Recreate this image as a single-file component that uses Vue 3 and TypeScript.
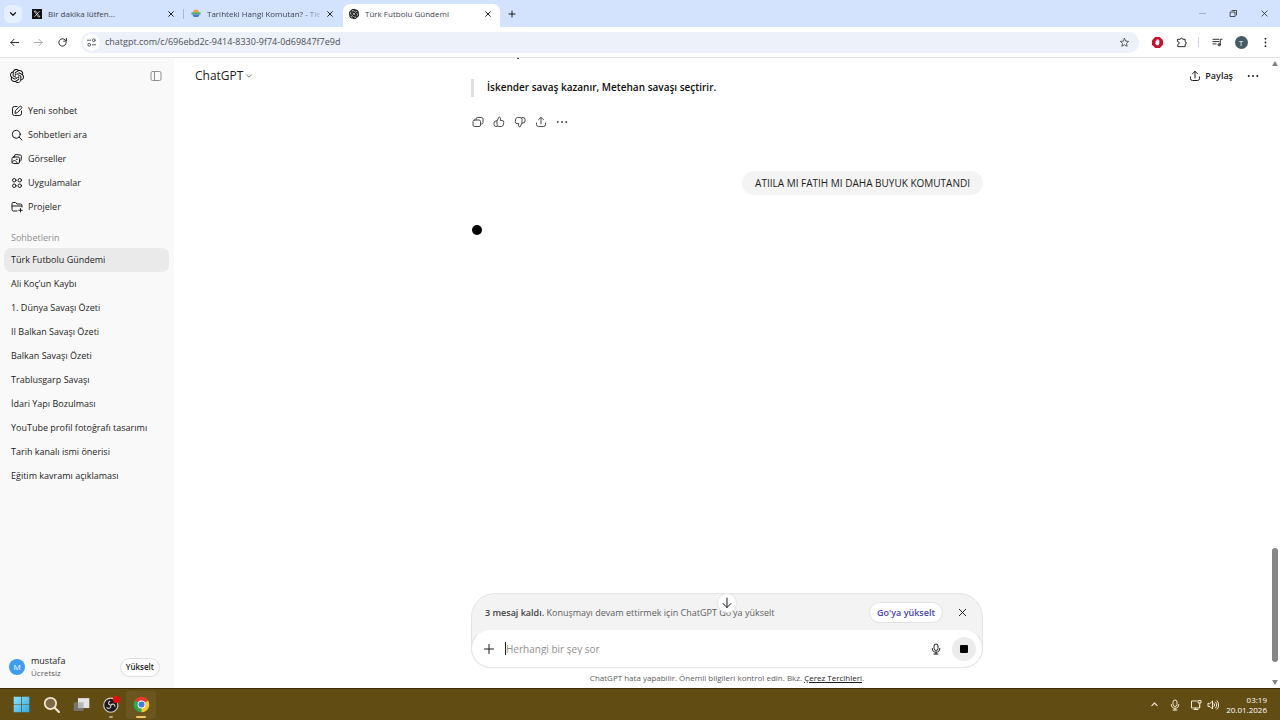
<script setup lang="ts">
import { h, ref } from 'vue'

const glyphs: Record<string, string[]> = {
  down: ['M6 9l6 6 6-6'],
  up: ['M5 15l7-7 7 7'],
  close: ['M5 5l14 14M19 5L5 19'],
  plus: ['M12 3v18M3 12h18'],
  back: ['M21 12H4M11 5l-7 7 7 7'],
  forward: ['M3 12h17M13 5l7 7-7 7'],
  reload: ['M20 12a8 8 0 1 1-2.3-5.7L20 8.500', 'M20.500 3v6h-6'],
  tune: ['M3 7h7M14 17h7', 'M20 7a3 3 0 1 1-6 0 3 3 0 0 1 6 0z', 'M10 17a3 3 0 1 1-6 0 3 3 0 0 1 6 0z'],
  star: ['M12 3l2.700 6 6.500.6-4.900 4.300 1.500 6.400L12 17l-5.800 3.300 1.500-6.400L2.800 9.600 9.300 9z'],
  puzzle: ['M4 5h5.500a2.500 2.500 0 0 1 5 0H20v5.500a2.500 2.500 0 0 1 0 5V21H4v-5a3 3 0 0 0 0-6z'],
  playlist: ['M2 5h13M2 10h13M2 15h7', 'M18 17V5h4', 'M18 17a2.500 2.500 0 1 1-5 0 2.500 2.500 0 0 1 5 0z'],
  minimize: ['M4 12h16'],
  restore: ['M4 8h12v12H4z', 'M8 4h12v12'],
  panel: ['M5 3h14a3 3 0 0 1 3 3v12a3 3 0 0 1-3 3H5a3 3 0 0 1-3-3V6a3 3 0 0 1 3-3z', 'M9 3v18'],
  compose: ['M12 3H7a4 4 0 0 0-4 4v10a4 4 0 0 0 4 4h10a4 4 0 0 0 4-4v-5', 'M8 16l1-5 8.500-8a2.500 2.500 0 0 1 3.500 3.500L13 15z'],
  search: ['M18.500 10.500a8 8 0 1 1-16 0 8 8 0 0 1 16 0z', 'M16.300 16.300L22 22'],
  images: ['M7 8V6a3 3 0 0 1 3.500-3l8 1A3 3 0 0 1 21 7.500l-1 7a3 3 0 0 1-3 2.500', 'M5 8h9a3 3 0 0 1 3 3v7a3 3 0 0 1-3 3H5a3 3 0 0 1-3-3v-7a3 3 0 0 1 3-3z', 'M2.500 18c4-5 7-4 10 2.500M10.500 12.500h2'],
  apps: ['M10 6.500a3.500 3.500 0 1 1-7 0 3.500 3.500 0 0 1 7 0z', 'M21 6.500a3.500 3.500 0 1 1-7 0 3.500 3.500 0 0 1 7 0z', 'M10 17.500a3.500 3.500 0 1 1-7 0 3.500 3.500 0 0 1 7 0z', 'M21 17.500a3.500 3.500 0 1 1-7 0 3.500 3.500 0 0 1 7 0z'],
  folder: ['M12 20H5a3 3 0 0 1-3-3V5a2 2 0 0 1 2-2h5l3 3h7a3 3 0 0 1 3 3v3M2 10h19', 'M19 15v7M15.500 18.500h7'],
  copy: ['M8 8V6a3 3 0 0 1 3-3h8a3 3 0 0 1 3 3v7a3 3 0 0 1-3 3h-2', 'M5 8h9a3 3 0 0 1 3 3v7a3 3 0 0 1-3 3H5a3 3 0 0 1-3-3v-7a3 3 0 0 1 3-3z'],
  like: ['M8 21H6a4 4 0 0 1-4-4v-3a4 4 0 0 1 4-4h2l4-8c2 0 3.500 1.500 3 4l-.6 3H18a3.500 3.500 0 0 1 3.500 4l-1 5a4 4 0 0 1-4 3H12a4 4 0 0 1-4-4v-7'],
  dislike: ['M16 3h2a4 4 0 0 1 4 4v3a4 4 0 0 1-4 4h-2l-4 8c-2 0-3.500-1.500-3-4l.6-3H6a3.500 3.500 0 0 1-3.500-4l1-5a4 4 0 0 1 4-3H12a4 4 0 0 1 4 4v7'],
  share: ['M12 16V3M7 7.500L12 2.500l5 5', 'M3 14v3a4 4 0 0 0 4 4h10a4 4 0 0 0 4-4v-3'],
  more: ['M3.500 12h.01M12 12h.01M20.500 12h.01'],
  kebab: ['M12 4v.01M12 12v.01M12 20v.01'],
  arrow: ['M12 2v19M4 13l8 8 8-8'],
  mic: ['M8 6a4 4 0 0 1 8 0v5a4 4 0 0 1-8 0z', 'M4.500 11a7.500 7.500 0 0 0 15 0M12 18.500V22M8 22h8'],
  network: ['M14 4H3v14h16v-6M8 21h8M11 18v3', 'M17 3h5v5h-5zM19.500 8v9'],
  volume: ['M2 9v6h4l5 5V4L6 9zM14 9a4 4 0 0 1 0 6M17 6a8 8 0 0 1 0 12M20 3.500a12 12 0 0 1 0 17'],
}

const Icon = (props: { name: string }) =>
  h(
    'svg',
    { class: 'icon', viewBox: '0 0 24 24', 'aria-hidden': 'true' },
    glyphs[props.name].map((d) => h('path', { d })),
  )
Icon.props = ['name']

const knot =
  'M22.2819 9.8211a5.9847 5.9847 0 0 0-.5157-4.9108 6.0462 6.0462 0 0 0-6.5098-2.9A6.0651 6.0651 0 0 0 4.9807 4.1818a5.9847 5.9847 0 0 0-3.9977 2.9 6.0462 6.0462 0 0 0 .7427 7.0966 5.98 5.98 0 0 0 .511 4.9107 6.051 6.051 0 0 0 6.5146 2.9001A5.9847 5.9847 0 0 0 13.2599 24a6.0557 6.0557 0 0 0 5.7718-4.2058 5.9894 5.9894 0 0 0 3.9977-2.9001 6.0557 6.0557 0 0 0-.7475-7.0729zm-9.022 12.6081a4.4755 4.4755 0 0 1-2.8764-1.0408l.1419-.0804 4.7783-2.7582a.7948.7948 0 0 0 .3927-.6813v-6.7369l2.02 1.1686a.071.071 0 0 1 .038.052v5.5826a4.504 4.504 0 0 1-4.4945 4.4944zm-9.6607-4.1254a4.4708 4.4708 0 0 1-.5346-3.0137l.142.0852 4.783 2.7582a.7712.7712 0 0 0 .7806 0l5.8428-3.3685v2.3324a.0804.0804 0 0 1-.0332.0615L9.74 19.9502a4.4992 4.4992 0 0 1-6.1408-1.6464zM2.3408 7.8956a4.485 4.485 0 0 1 2.3655-1.9728V11.6a.7664.7664 0 0 0 .3879.6765l5.8144 3.3543-2.0201 1.1685a.0757.0757 0 0 1-.071 0l-4.8303-2.7865A4.504 4.504 0 0 1 2.3408 7.872zm16.5963 3.8558L13.1038 8.364 15.1192 7.2a.0757.0757 0 0 1 .071 0l4.8303 2.7913a4.4944 4.4944 0 0 1-.6765 8.1042v-5.6772a.79.79 0 0 0-.407-.667zm2.0107-3.0231l-.142-.0852-4.7735-2.7818a.7759.7759 0 0 0-.7854 0L9.409 9.2297V6.8974a.0662.0662 0 0 1 .0284-.0615l4.8303-2.7866a4.4992 4.4992 0 0 1 6.6802 4.66zM8.3065 12.863l-2.02-1.1638a.0804.0804 0 0 1-.038-.0567V6.0742a4.4992 4.4992 0 0 1 7.3757-3.4537l-.142.0805L8.704 5.459a.7948.7948 0 0 0-.3927.6813zm1.0976-2.3654l2.602-1.4998 2.6069 1.4998v2.9994l-2.5974 1.4997-2.6067-1.4997Z'

const menu = [
  { icon: 'compose', label: 'Yeni sohbet' },
  { icon: 'search', label: 'Sohbetleri ara' },
  { icon: 'images', label: 'Görseller' },
  { icon: 'apps', label: 'Uygulamalar' },
  { icon: 'folder', label: 'Projeler' },
]

const chats = [
  'Türk Futbolu Gündemi',
  'Ali Koç’un Kaybı',
  '1. Dünya Savaşı Özeti',
  'II Balkan Savaşı Özeti',
  'Balkan Savaşı Özeti',
  'Trablusgarp Savaşı',
  'İdari Yapı Bozulması',
  'YouTube profil fotoğrafı tasarımı',
  'Tarih kanalı ismi önerisi',
  'Eğitim kavramı açıklaması',
]

const actions = [
  { icon: 'copy', label: 'Kopyala' },
  { icon: 'like', label: 'İyi yanıt' },
  { icon: 'dislike', label: 'Kötü yanıt' },
  { icon: 'share', label: 'Paylaş' },
  { icon: 'more', label: 'Diğer' },
]

const active = ref(0)
const url = ref('chatgpt.com/c/696ebd2c-9414-8330-9f74-0d69847f7e9d')
const draft = ref('')
</script>

<template>
  <div class="desktop">
    <header class="tabs">
      <button class="tab-search" aria-label="Sekmelerde ara"><Icon name="down" /></button>
      <div class="tab">
        <svg class="favicon" viewBox="0 0 24 24" aria-hidden="true">
          <path d="M0 0h24v24H0z" fill="#111" />
          <path d="M5 5h4l10 14h-4zM18.500 5L5.500 19" fill="none" stroke="#fff" stroke-width="1.600" />
        </svg>
        <span class="tab-title">Bir dakika lütfen...</span>
        <button class="tab-close" aria-label="Sekmeyi kapat"><Icon name="close" /></button>
      </div>
      <i class="tab-line"></i>
      <div class="tab">
        <svg class="favicon" viewBox="0 0 24 24" aria-hidden="true">
          <path d="M5 8a7 7 0 0 1 14 0z" fill="#e9a23b" />
          <path d="M1 8h22v5H1z" fill="#55a868" />
          <path d="M3 13h18l-4 6H7z" fill="#3b7cc4" />
        </svg>
        <span class="tab-title faded">Tarihteki Hangi Komutan? - Tie</span>
        <button class="tab-close" aria-label="Sekmeyi kapat"><Icon name="close" /></button>
      </div>
      <div class="tab current">
        <svg class="favicon" viewBox="0 0 24 24" aria-hidden="true"><path :d="knot" stroke="#000" /></svg>
        <span class="tab-title">Türk Futbolu Gündemi</span>
        <button class="tab-close" aria-label="Sekmeyi kapat"><Icon name="close" /></button>
      </div>
      <button class="tab-new" aria-label="Yeni sekme"><Icon name="plus" /></button>
      <div class="window-buttons">
        <button aria-label="Simge durumuna küçült"><Icon name="minimize" /></button>
        <button aria-label="Geri yükle"><Icon name="restore" /></button>
        <button aria-label="Kapat"><Icon name="close" /></button>
      </div>
    </header>

    <div class="toolbar">
      <button aria-label="Geri"><Icon name="back" /></button>
      <button class="dim" aria-label="İleri"><Icon name="forward" /></button>
      <button aria-label="Yenile"><Icon name="reload" /></button>
      <div class="address">
        <button class="site-info" aria-label="Site bilgileri"><Icon name="tune" /></button>
        <input v-model="url" aria-label="Adres çubuğu" spellcheck="false" />
        <button aria-label="Yer işareti ekle"><Icon name="star" /></button>
      </div>
      <div class="extensions">
        <button aria-label="Reklam engelleyici">
          <svg class="blocker" viewBox="0 0 24 24" aria-hidden="true">
            <path d="M7 0h10l7 7v10l-7 7H7l-7-7V7z" fill="#c4122f" />
            <path d="M8 12V8h2V6h2V5h2v2h2v7l-2 4h-4l-3-4z" fill="#fff" />
          </svg>
        </button>
        <button aria-label="Uzantılar"><Icon name="puzzle" /></button>
        <i class="divider"></i>
        <button aria-label="Medya"><Icon name="playlist" /></button>
        <button class="profile" aria-label="Profil"><span>T</span></button>
        <button class="kebab" aria-label="Menü"><Icon name="kebab" /></button>
      </div>
    </div>

    <div class="page">
      <aside class="sidebar">
        <div class="brand">
          <svg class="logo" viewBox="0 0 24 24" aria-hidden="true"><path :d="knot" /></svg>
          <button class="collapse" aria-label="Kenar çubuğunu kapat"><Icon name="panel" /></button>
        </div>
        <nav class="menu">
          <a v-for="item in menu" :key="item.label" href="#"><Icon :name="item.icon" />{{ item.label }}</a>
        </nav>
        <h2>Sohbetlerin</h2>
        <nav class="history">
          <a
            v-for="(chat, i) in chats"
            :key="chat"
            href="#"
            :class="{ active: i === active }"
            @click.prevent="active = i"
            >{{ chat }}</a
          >
        </nav>
        <div class="account">
          <span class="avatar">M</span>
          <div class="who">
            <span>mustafa</span>
            <small>Ücretsiz</small>
          </div>
          <button class="upgrade">Yükselt</button>
        </div>
      </aside>

      <main class="main">
        <div class="topbar">
          <button class="model">ChatGPT <Icon name="down" /></button>
          <button class="share"><Icon name="share" />Paylaş</button>
          <button class="more" aria-label="Diğer"><Icon name="more" /></button>
        </div>

        <section class="thread">
          <div class="cut-line"><i></i></div>
          <blockquote>İskender savaş kazanır, Metehan savaşı seçtirir.</blockquote>
          <div class="actions">
            <button v-for="a in actions" :key="a.icon" :class="a.icon" :aria-label="a.label">
              <Icon :name="a.icon" />
            </button>
          </div>
          <p class="bubble">ATIILA MI FATIH MI DAHA BUYUK KOMUTANDI</p>
          <span class="pending"></span>
        </section>

        <footer class="dock">
          <div class="composer">
            <div class="notice">
              <p><b>3 mesaj kaldı.</b> Konuşmayı devam ettirmek için ChatGPT Go'ya yükselt</p>
              <button class="go">Go'ya yükselt</button>
              <button class="dismiss" aria-label="Kapat"><Icon name="close" /></button>
            </div>
            <form class="prompt" @submit.prevent>
              <button type="button" class="add" aria-label="Ekle"><Icon name="plus" /></button>
              <i class="caret"></i>
              <input v-model="draft" placeholder="Herhangi bir şey sor" aria-label="Mesaj" />
              <button type="button" class="dictate" aria-label="Dikte et"><Icon name="mic" /></button>
              <button type="button" class="stop" aria-label="Durdur"><i></i></button>
            </form>
            <button class="jump" aria-label="En alta git"><Icon name="arrow" /></button>
          </div>
          <p class="legal">ChatGPT hata yapabilir. Önemli bilgileri kontrol edin. Bkz. <a href="#">Çerez Tercihleri</a>.</p>
        </footer>

        <div class="scrollbar" aria-hidden="true">
          <i class="tri-up"></i>
          <i class="thumb"></i>
          <i class="tri-down"></i>
        </div>
      </main>
    </div>

    <footer class="taskbar">
      <button aria-label="Başlat">
        <svg viewBox="0 0 24 24" aria-hidden="true">
          <defs>
            <linearGradient id="pane" x1="0" y1="0" x2="1" y2="1">
              <stop offset="0" stop-color="#8fe3fb" />
              <stop offset="1" stop-color="#2ea9e6" />
            </linearGradient>
          </defs>
          <path d="M1 1h10.500v10.500H1zM12.500 1H23v10.500H12.500zM1 12.500h10.500V23H1zM12.500 12.500H23V23H12.500z" fill="url(#pane)" />
        </svg>
      </button>
      <button aria-label="Ara">
        <svg viewBox="0 0 24 24" aria-hidden="true">
          <circle cx="10.500" cy="10.500" r="8" fill="#7c6a44" stroke="#f3e6cf" stroke-width="2.500" />
          <path d="M16.500 16.500L22.500 22.500" stroke="#f3e6cf" stroke-width="3" stroke-linecap="round" />
        </svg>
      </button>
      <button aria-label="Görev görünümü">
        <svg viewBox="0 0 24 24" aria-hidden="true">
          <path d="M1 9h14v12H1z" fill="#77746f" />
          <path d="M7 3h16v14H7z" fill="#e4e5e8" />
          <path d="M7 9h8v8H7z" fill="#b5b6ba" />
        </svg>
      </button>
      <button aria-label="OBS" class="running">
        <svg viewBox="0 0 24 24" aria-hidden="true">
          <circle cx="11" cy="13" r="10" fill="#1d1b22" stroke="#d8d0c4" stroke-width="1.600" />
          <path d="M11 13c-4-1-4-4-1-6M11 13c3-3 6-1 6 2M11 13c1 4-3 6-6 3" fill="none" stroke="#d8d0c4" stroke-width="1.500" />
          <circle cx="19" cy="5" r="5" fill="#ee0909" />
        </svg>
      </button>
      <button aria-label="Chrome" class="running focused">
        <svg viewBox="0 0 24 24" aria-hidden="true">
          <path d="M12 12L2.500 6.500A11 11 0 0 1 21.500 6.500z" fill="#e33b2e" />
          <path d="M12 12L2.500 6.500A11 11 0 0 0 12 23z" fill="#2da94f" />
          <path d="M12 12L12 23A11 11 0 0 0 21.500 6.500z" fill="#fcc934" />
          <circle cx="12" cy="12" r="5.500" fill="#fff" />
          <circle cx="12" cy="12" r="4.300" fill="#3f7ee8" />
        </svg>
      </button>
      <div class="tray">
        <Icon name="up" class="tray-up" />
        <Icon name="mic" class="tray-mic" />
        <Icon name="network" />
        <Icon name="volume" />
        <div class="clock"><span>03:19</span><span>20.01.2026</span></div>
      </div>
    </footer>
  </div>
</template>

<style>
html,
body {
  margin: 0;
  height: 100%;
}
</style>

<style scoped>
.desktop {
  display: flex;
  flex-direction: column;
  height: 100vh;
  overflow: hidden;
  background: #fff;
  color: #1c1c1c;
  font: 9px/12px 'Open Sans', 'Noto Sans', sans-serif;
}
.desktop * {
  box-sizing: border-box;
}
button {
  display: flex;
  align-items: center;
  justify-content: center;
  flex: none;
  padding: 0;
  border: 0;
  background: none;
  color: inherit;
  font: inherit;
}
input {
  min-width: 0;
  flex: 1;
  padding: 0;
  border: 0;
  outline: 0;
  background: none;
  color: inherit;
  font: inherit;
}
a {
  color: inherit;
  text-decoration: none;
}
p {
  margin: 0;
}
.icon {
  width: 12px;
  height: 12px;
  flex: none;
  fill: none;
  stroke: currentColor;
  stroke-width: 2;
  stroke-linecap: round;
  stroke-linejoin: round;
}

/* Tab strip */
.tabs {
  display: flex;
  align-items: center;
  flex: none;
  height: 27px;
  padding-left: 4px;
  background: #d3e2fd;
}
.tab-search {
  width: 18px;
  height: 18px;
  margin-right: 4px;
  border-radius: 6px;
  background: #e6effd;
}
.tab-search .icon {
  width: 10px;
  height: 10px;
  stroke-width: 3;
}
.tab {
  display: flex;
  align-items: center;
  align-self: flex-end;
  width: 157px;
  height: 23px;
  padding: 0 8px 4px 6px;
  gap: 6px;
  color: #3d4350;
  font-size: 8px;
}
.tab + .tab {
  margin-left: 1px;
}
.tab-line {
  width: 1px;
  height: 10px;
  margin-right: 1px;
  background: #a9bad8;
}
.favicon {
  width: 10px;
  height: 10px;
  flex: none;
}
.tab-title {
  flex: 1;
  overflow: hidden;
  white-space: nowrap;
}
.faded {
  mask-image: linear-gradient(90deg, #000 85%, #0003);
}
.tab-close .icon {
  width: 8px;
  height: 8px;
  stroke: #222;
  stroke-width: 3;
}
.current {
  border-radius: 7px 7px 0 0;
  background: #fff;
}
.tab-new {
  width: 24px;
}
.tab-new .icon {
  width: 8px;
  height: 8px;
  stroke-width: 3;
}
.window-buttons {
  display: flex;
  margin-left: auto;
}
.window-buttons button {
  width: 31px;
  height: 27px;
}
.window-buttons .icon {
  width: 9px;
  height: 9px;
}
.window-buttons button:first-child {
  color: #8d98ab;
}

/* Toolbar */
.toolbar {
  display: flex;
  align-items: center;
  flex: none;
  height: 31px;
  padding: 0 6px 0 2px;
  border-bottom: 1px solid #dfe1e2;
}
.toolbar > button {
  width: 24px;
}
.toolbar .icon {
  width: 11px;
  height: 11px;
}
.toolbar .dim {
  color: #a3a5a9;
}
.address {
  display: flex;
  align-items: center;
  flex: 1;
  height: 21px;
  margin-left: 7px;
  padding: 0 9px 0 2px;
  gap: 5px;
  border-radius: 11px;
  background: #edf1fa;
  color: #4c5058;
}
.site-info {
  width: 17px;
  height: 17px;
  border-radius: 50%;
  background: #fff;
}
.extensions {
  display: flex;
  align-items: center;
  padding-left: 6px;
}
.extensions button {
  width: 24px;
}
.extensions .kebab {
  width: 18px;
  margin-left: 3px;
}
.kebab .icon {
  stroke-width: 4;
}
.blocker {
  width: 11px;
  height: 11px;
}
.divider {
  width: 1px;
  height: 10px;
  margin: 0 6px 0 5px;
  background: #ccd5e6;
}
.profile span {
  width: 13px;
  height: 13px;
  border-radius: 50%;
  background: #455a64;
  color: #fff;
  font-size: 8px;
  line-height: 13px;
}

/* Sidebar */
.page {
  display: flex;
  flex: 1;
  min-height: 0;
}
.sidebar {
  display: flex;
  flex-direction: column;
  flex: none;
  width: 174px;
  background: #f9f9f9;
}
.brand {
  display: flex;
  align-items: center;
  justify-content: space-between;
  height: 35px;
  padding: 0 12px 0 10px;
}
.logo {
  width: 14px;
  height: 14px;
}
.collapse {
  color: #8f8f8f;
}
.menu {
  padding-top: 6px;
}
.menu a {
  display: flex;
  align-items: center;
  height: 24px;
  padding-left: 11px;
  gap: 5px;
}
h2 {
  margin: 13px 0 4px 11px;
  color: #8f8f8f;
  font: inherit;
}
.history a {
  display: flex;
  align-items: center;
  height: 24px;
  margin: 0 5px 0 4px;
  padding-left: 7px;
  border-radius: 7px;
  white-space: nowrap;
}
.history .active {
  background: #eaeaea;
}
.account {
  display: flex;
  align-items: center;
  height: 42px;
  margin-top: auto;
  padding: 0 14px 0 9px;
  gap: 6px;
}
.avatar {
  width: 16px;
  border-radius: 50%;
  background: #3f9cf0;
  color: #fff;
  font-size: 8px;
  line-height: 16px;
  text-align: center;
}
.who {
  display: flex;
  flex-direction: column;
  flex: 1;
}
.who small {
  color: #5d5d5d;
  font-size: 8px;
}
.upgrade {
  height: 19px;
  padding: 0 5px;
  border: 1px solid #dedede;
  border-radius: 10px;
  background: #fff;
  font-size: 8px;
  font-weight: 600;
}

/* Conversation */
.main {
  position: relative;
  display: flex;
  flex-direction: column;
  flex: 1;
  min-width: 0;
}
.topbar {
  position: absolute;
  inset: 0 0 auto;
  display: flex;
  align-items: center;
  height: 35px;
  padding: 0 21px;
}
.model {
  margin-right: auto;
  gap: 1px;
  font-size: 12px;
}
.model .icon {
  width: 10px;
  height: 10px;
  color: #6a6a6a;
}
.topbar .share {
  gap: 4px;
  font-weight: 600;
}
.topbar .more {
  margin-left: 14px;
}
.more .icon {
  stroke-width: 4;
}
.thread {
  display: flex;
  flex-direction: column;
  flex: 1;
  width: 100%;
  max-width: 512px;
  margin: 0 auto;
}
.cut-line {
  height: 2px;
  padding-left: 46px;
}
.cut-line i {
  display: block;
  width: 2px;
  height: 1px;
  background: #444;
}
blockquote {
  margin: 19px 0 0;
  padding: 1px 0 2px 13px;
  border-left: 3px solid #e0e0e0;
  color: #0d0d0d;
  font-size: 10px;
  font-weight: 600;
  line-height: 15px;
}
.actions {
  display: flex;
  height: 50px;
  margin-left: -4px;
  color: #4d4d4d;
}
.actions button {
  width: 21px;
}
.bubble {
  align-self: flex-end;
  margin-top: 24px;
  padding: 4px 13px;
  border-radius: 12px;
  background: #f4f4f4;
  font-size: 10px;
  line-height: 16px;
}
.pending {
  width: 10px;
  height: 10px;
  margin: 30px 0 0 1px;
  border-radius: 50%;
  background: #000;
}

/* Composer */
.dock {
  width: 100%;
  max-width: 512px;
  margin: 0 auto;
}
.composer {
  position: relative;
  border: 1px solid #e4e4e4;
  border-radius: 24px 24px 20px 20px;
  background: #f3f3f3;
}
.notice {
  display: flex;
  align-items: center;
  height: 35px;
  padding: 2px 14px 0 13px;
  color: #5d5d5d;
}
.notice p {
  flex: 1;
}
.notice b {
  font-weight: 600;
  color: #444;
}
.go {
  height: 21px;
  padding: 0 7px;
  border: 1px solid #e2e2e2;
  border-radius: 11px;
  background: #fff;
  color: #4a3fb5;
  font-weight: 600;
}
.dismiss {
  margin-left: 14px;
  color: #111;
}
.dismiss .icon {
  width: 11px;
  height: 11px;
}
.prompt {
  display: flex;
  align-items: center;
  height: 39px;
  margin: 0 -1px -1px;
  padding: 0 6px 0 11px;
  border: 1px solid #e4e4e4;
  border-top-color: #f3f3f3;
  border-radius: 20px;
  background: #fff;
  font-size: 10px;
}
.caret {
  width: 1px;
  height: 13px;
  margin-left: 10px;
  background: #222;
}
.prompt input::placeholder {
  color: #8f8f8f;
  opacity: 1;
}
.stop {
  width: 24px;
  height: 24px;
  margin-left: 10px;
  border-radius: 50%;
  background: #ececec;
}
.stop i {
  width: 8px;
  height: 8px;
  border-radius: 1px;
  background: #000;
}
.jump {
  position: absolute;
  top: -1px;
  left: 50%;
  width: 20px;
  height: 20px;
  margin-left: -10px;
  border: 1px solid #e6e6e6;
  border-radius: 50%;
  background: #fff;
}
.legal {
  height: 20px;
  padding-top: 4px;
  color: #5d5d5d;
  font-size: 8px;
  text-align: center;
}
.legal a {
  color: #1c1c1c;
  text-decoration: underline;
}
.scrollbar {
  position: absolute;
  inset: 0 0 0 auto;
  display: flex;
  flex-direction: column;
  align-items: center;
  width: 10px;
  padding: 3px 0;
}
.tri-up,
.tri-down {
  width: 6px;
  height: 5px;
  background: #858585;
  clip-path: polygon(50% 0, 100% 100%, 0 100%);
}
.tri-down {
  clip-path: polygon(0 0, 100% 0, 50% 100%);
}
.thumb {
  width: 6px;
  height: 114px;
  margin: auto 0 18px;
  border-radius: 3px;
  background: #868686;
}

/* Taskbar */
.taskbar {
  display: flex;
  align-items: center;
  flex: none;
  height: 32px;
  padding: 0 13px 0 6px;
  border-top: 1px solid #3b2804;
  background: #614c14;
  color: #f5ead2;
}
.taskbar button {
  position: relative;
  width: 30px;
  height: 28px;
}
.taskbar button svg {
  width: 17px;
  height: 17px;
}
.running::after {
  content: '';
  position: absolute;
  bottom: 1px;
  width: 4px;
  height: 2px;
  border-radius: 1px;
  background: #b5a684;
}
.focused {
  border-radius: 3px;
  background: #6b5620;
}
.focused::after {
  width: 10px;
  background: #f3c766;
}
.tray {
  display: flex;
  align-items: center;
  margin-left: auto;
  gap: 5px;
}
.tray .tray-up {
  width: 9px;
  height: 9px;
  margin-right: 5px;
  stroke-width: 3;
}
.tray .tray-mic {
  margin-right: 4px;
}
.clock {
  display: flex;
  flex-direction: column;
  margin-left: 2px;
  color: #fff;
  font-size: 8px;
  line-height: 10px;
  text-align: right;
}
</style>
